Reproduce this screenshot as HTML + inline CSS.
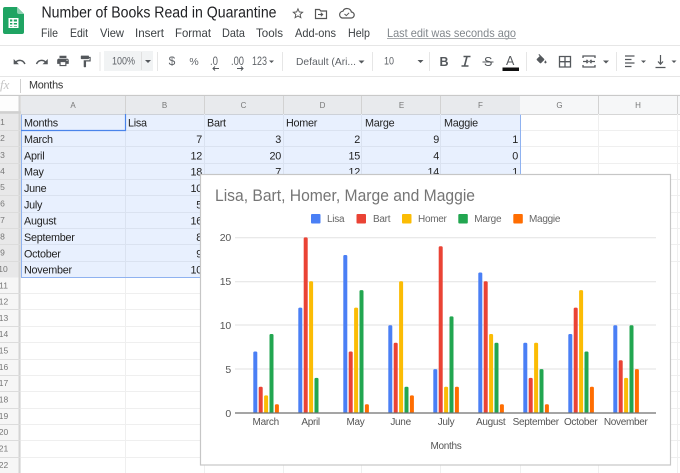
<!DOCTYPE html>
<html><head><meta charset="utf-8"><title>Number of Books Read in Quarantine</title>
<style>
html,body{margin:0;padding:0;background:#fff;width:680px;height:473px;overflow:hidden}
svg{display:block;filter:blur(.3px)}
text{font-family:"Liberation Sans",Arial,sans-serif;white-space:pre}
.m{font-size:12px;fill:#3c4043}
.t{font-size:11px;fill:#5f6368}
.c{font-size:10.8px;fill:#222;letter-spacing:-.25px}
.n{text-anchor:end}
.h{font-size:8px;fill:#777;text-anchor:middle}
.r{font-size:8.5px;fill:#777;text-anchor:middle}
.a{font-size:10px;fill:#555;text-anchor:middle;letter-spacing:-.3px}
.y{font-size:10.500px;fill:#555;text-anchor:end;letter-spacing:-.2px}
.l{font-size:10px;fill:#666;letter-spacing:-.28px}
.i{fill:#54585c}
.b1{fill:#4a7ff5}.b2{fill:#ea4335}.b3{fill:#fbbc04}.b4{fill:#22a650}.b5{fill:#ff6d01}
</style></head><body>
<svg width="680" height="473" viewBox="0 0 680 473" xmlns="http://www.w3.org/2000/svg">
<rect width="680" height="473" fill="#fff"/>

<!-- logo -->
<path d="M5 7h12l7 7v18a2 2 0 0 1-2 2H5a2 2 0 0 1-2-2V9a2 2 0 0 1 2-2z" fill="#1fa463"/>
<path d="M17 7l7 7h-5a2 2 0 0 1-2-2z" fill="#8ed1b1"/>
<path d="M8.500 18h10v10h-10z M10 19.500v2h2.300v-2z M13.800 19.500v2H17v-2z M10 23v1.500h2.300V23z M13.800 23v1.500H17V23z M10 26v.6h2.300V26z M13.800 26v.6H17V26z" fill="#fff" fill-rule="evenodd"/>

<text x="41.500" y="17.500" font-size="15.500" fill="#202124" textLength="235" lengthAdjust="spacingAndGlyphs">Number of Books Read in Quarantine</text>
<path transform="translate(291,6.500) scale(.58)" d="M22 9.240l-7.190-.62L12 2 9.190 8.630 2 9.240l5.460 4.730L5.820 21 12 17.270 18.180 21l-1.630-7.030L22 9.240zM12 15.400l-3.760 2.270 1-4.280-3.320-2.880 4.380-.38L12 6.100l1.710 4.040 4.380.38-3.320 2.880 1 4.280L12 15.400z" fill="#555"/>
<path d="M315.500 9.500h4l1.300 1.500h5.700v7.500h-11z" fill="none" stroke="#555" stroke-width="1.200"/>
<path d="M318 14.500h4.500M320.800 12.700l1.900 1.800-1.900 1.800" fill="none" stroke="#555" stroke-width="1"/>
<path d="M342 18h9a3 3 0 0 0 .4-6 4.500 4.500 0 0 0-8.500-.8A3.500 3.500 0 0 0 342 18z" fill="none" stroke="#555" stroke-width="1.200"/>
<path d="M344.500 14l1.800 1.600 2.800-2.800" fill="none" stroke="#555" stroke-width="1"/>

<text x="41" y="37" class="m" textLength="17" lengthAdjust="spacingAndGlyphs">File</text>
<text x="70" y="37" class="m" textLength="18" lengthAdjust="spacingAndGlyphs">Edit</text>
<text x="100" y="37" class="m" textLength="24" lengthAdjust="spacingAndGlyphs">View</text>
<text x="135" y="37" class="m" textLength="29" lengthAdjust="spacingAndGlyphs">Insert</text>
<text x="175" y="37" class="m" textLength="36" lengthAdjust="spacingAndGlyphs">Format</text>
<text x="222" y="37" class="m" textLength="23" lengthAdjust="spacingAndGlyphs">Data</text>
<text x="256" y="37" class="m" textLength="27" lengthAdjust="spacingAndGlyphs">Tools</text>
<text x="295" y="37" class="m" textLength="41" lengthAdjust="spacingAndGlyphs">Add-ons</text>
<text x="348" y="37" class="m" textLength="22" lengthAdjust="spacingAndGlyphs">Help</text>
<text x="387" y="37" class="m" style="fill:#80868b" textLength="129" lengthAdjust="spacingAndGlyphs">Last edit was seconds ago</text>
<path d="M387 38.500H516" stroke="#a8abae" stroke-width="1"/>

<path d="M0 45.500H680M0 76.500H680" stroke="#e6e6e6" stroke-width="1"/>

<!-- toolbar -->
<g class="i">
<path transform="translate(12.500,55) scale(.58)" d="M12.500 8c-2.650 0-5.050.99-6.900 2.600L2 7v9h9l-3.620-3.620c1.390-1.160 3.160-1.880 5.120-1.880 3.540 0 6.550 2.310 7.600 5.500l2.370-.78C21.080 11.030 17.150 8 12.500 8z"/>
<path transform="translate(35,55) scale(.58)" d="M18.400 10.600C16.550 8.990 14.150 8 11.500 8c-4.650 0-8.580 3.030-9.960 7.220L3.900 16c1.050-3.190 4.050-5.500 7.600-5.500 1.950 0 3.730.72 5.120 1.880L13 16h9V7l-3.600 3.600z"/>
<path transform="translate(56,54) scale(.58)" d="M19 8H5c-1.660 0-3 1.340-3 3v6h4v4h12v-4h4v-6c0-1.660-1.340-3-3-3zm-3 11H8v-5h8v5zm3-7c-.55 0-1-.45-1-1s.45-1 1-1 1 .45 1 1-.45 1-1 1zm-1-9H6v4h12V3z"/>
<path transform="translate(78.500,54.500) scale(.58)" d="M18 4V3c0-.55-.45-1-1-1H5c-.55 0-1 .45-1 1v4c0 .55.45 1 1 1h12c.55 0 1-.45 1-1V6h1v4H9v11c0 .55.45 1 1 1h2c.55 0 1-.45 1-1v-9h8V4h-3z"/>
</g>
<path d="M100 52v19M157.500 52v19M282.500 52v19M372.500 52v19M429.500 52v19M526.500 52v19M616.500 52v19" stroke="#e6e6e6" stroke-width="1"/>
<rect x="104" y="51" width="49" height="20" fill="#f1f3f4"/>
<path d="M141.500 52v18" stroke="#e0e0e0"/>
<text x="112" y="64.500" class="t" textLength="23" lengthAdjust="spacingAndGlyphs">100%</text>
<path d="M145 60h6l-3 3z" class="i"/>
<text x="172" y="65" class="t" text-anchor="middle" style="font-size:12px">$</text>
<text x="194" y="65" class="t" text-anchor="middle" style="font-size:10.500px">%</text>
<text x="210" y="65" class="t" style="font-size:11.500px" textLength="8" lengthAdjust="spacingAndGlyphs">.0</text>
<path d="M219 68.500h-6M215 66.500l-2 2 2 2" fill="none" stroke="#54585c"/>
<text x="231" y="65" class="t" style="font-size:11.500px" textLength="13" lengthAdjust="spacingAndGlyphs">.00</text>
<path d="M237 68.500h6M241 66.500l2 2-2 2" fill="none" stroke="#54585c"/>
<text x="252" y="65" class="t" style="font-size:11.500px" textLength="15" lengthAdjust="spacingAndGlyphs">123</text>
<path d="M269 60.500h5l-2.500 2.500z" class="i"/>
<text x="296" y="65" class="t" style="font-size:10.500px" textLength="60" lengthAdjust="spacingAndGlyphs">Default (Ari...</text>
<path d="M358.500 60.500h6l-3 3z" class="i"/>
<text x="384" y="64.500" class="t" textLength="10" lengthAdjust="spacingAndGlyphs">10</text>
<path d="M417.500 60h6l-3 3z" class="i"/>
<text x="439.500" y="66" font-size="12.500" font-weight="bold" fill="#54585c">B</text>
<path d="M463.500 56.500h7M461.500 66h7M467 56.500L464.500 66" fill="none" stroke="#54585c" stroke-width="1.600"/>
<text x="484" y="66" font-size="12.500" fill="#54585c">S</text>
<path d="M482.500 62h11" stroke="#54585c"/>
<text x="506" y="65" font-size="12.500" fill="#54585c">A</text>
<rect x="502.500" y="67.500" width="16.500" height="3.500" fill="#111"/>
<path transform="translate(535,54) scale(.55)" d="M16.560 8.940L7.620 0 6.210 1.410l2.380 2.380-5.150 5.150c-.59.59-.59 1.540 0 2.120l5.500 5.500c.29.29.68.44 1.060.44s.77-.15 1.060-.44l5.500-5.500c.59-.58.59-1.530 0-2.120zM19 11.500s-2 2.170-2 3.500c0 1.100.9 2 2 2s2-.9 2-2c0-1.330-2-3.500-2-3.500z" class="i"/>
<path d="M559.500 56.500h11v10.500h-11zM565 56.500v10.500M559.500 61.700h11" fill="none" stroke="#54585c" stroke-width="1.300"/>
<path d="M583 58v-2h12v2M583 65v2h12v-2M583 61.500h4M591 61.500h4M586.500 59.800l1.600 1.700-1.600 1.700M591.500 59.800l-1.600 1.700 1.600 1.700" fill="none" stroke="#54585c" stroke-width="1.300"/>
<path d="M603 60.500h6l-3 3z" class="i"/>
<path d="M625 56h9.500M625 59.500h6.500M625 63h9.500M625 66.500h6.500" stroke="#54585c" stroke-width="1.200"/>
<path d="M641 60.500h5l-2.500 2.500z" class="i"/>
<path d="M655.500 67.500h10M660.500 55v9M658 61.500l2.500 2.700 2.500-2.700" fill="none" stroke="#54585c" stroke-width="1.200"/>
<path d="M671.500 60.500h5l-2.500 2.500z" class="i"/>

<!-- formula bar -->
<text x="0" y="89" font-size="13" font-style="italic" fill="#c4c4c4" style="font-family:'Liberation Serif',serif">fx</text>
<path d="M20.500 79v14" stroke="#d0d0d0"/>
<text x="29" y="88.500" class="c" style="fill:#333" textLength="34" lengthAdjust="spacingAndGlyphs">Months</text>

<!-- grid -->
<path d="M0 95.500H680" stroke="#c9c9c9" stroke-width="1.200"/>
<rect x="21" y="96" width="499" height="18" fill="#e8eaed"/>
<rect x="520" y="96" width="160" height="18" fill="#f6f7f8"/>
<rect x="0" y="96" width="21" height="181.500" fill="#e8e8e9"/>
<rect x="0" y="96" width="18.500" height="15" fill="#fdfdfd"/>
<rect x="0" y="277.500" width="21" height="196" fill="#f6f6f6"/>
<path d="M19.500 96v378" stroke="#d4d4d4" stroke-width="2"/>
<path d="M0 112.500H21" stroke="#d0d0d0" stroke-width="2.500"/>
<path d="M0 130.500H20M0 146.500H20M0 163.500H20M0 179.500H20M0 195.500H20M0 212.500H20M0 228.500H20M0 244.500H20M0 261.500H20M0 293.500H20M0 309.500H20M0 326.500H20M0 342.500H20M0 359.500H20M0 375.500H20M0 391.500H20M0 408.500H20M0 424.500H20M0 440.500H20M0 457.500H20" stroke="#dcdcdc"/>
<path d="M125.500 96v18M204.500 96v18M283.500 96v18M361.500 96v18M440.500 96v18M598.500 96v18M677.500 96v18" stroke="#d2d2d2"/>
<path d="M21 114.500H680" stroke="#d6d6d6"/>
<path d="M21 130.500H680M21 146.500H680M21 163.500H680M21 179.500H680M21 195.500H680M21 212.500H680M21 228.500H680M21 244.500H680M21 261.500H680M21 293.500H680M21 309.500H680M21 326.500H680M21 342.500H680M21 359.500H680M21 375.500H680M21 391.500H680M21 408.500H680M21 424.500H680M21 440.500H680M21 457.500H680M125.500 114v359M204.500 114v359M283.500 114v359M361.500 114v359M440.500 114v359M520.500 114v359M598.500 114v359M677.500 114v359" stroke="#efefef"/>
<rect x="21" y="114.500" width="499" height="163" fill="#4285f4" fill-opacity=".12"/>
<path d="M21.500 114.500V277.500H520.500V114.500" fill="none" stroke="#8fb2f0" stroke-width="1"/>
<path d="M21 130.500H125.500V114" fill="none" stroke="#4a84ea" stroke-width="1.200"/>

<text class="h" x="73" y="108">A</text><text class="h" x="164.500" y="108">B</text><text class="h" x="243.500" y="108">C</text><text class="h" x="322.500" y="108">D</text><text class="h" x="401.500" y="108">E</text><text class="h" x="480.500" y="108">F</text><text class="h" x="559.500" y="108">G</text><text class="h" x="638" y="108">H</text>
<g class="r">
<text x="2.500" y="125">1</text><text x="2.500" y="141">2</text><text x="2.500" y="158">3</text><text x="2.500" y="174">4</text><text x="2.500" y="190">5</text><text x="2.500" y="206.500">6</text><text x="2.500" y="223">7</text><text x="2.500" y="239.500">8</text><text x="2.500" y="255.500">9</text><text x="3" y="272">10</text><text x="3.500" y="288.500">11</text><text x="3.500" y="304.500">12</text><text x="3.500" y="321">13</text><text x="3.500" y="337">14</text><text x="3.500" y="353.500">15</text><text x="3.500" y="370">16</text><text x="3.500" y="386">17</text><text x="3.500" y="402.500">18</text><text x="3.500" y="419">19</text><text x="3.500" y="435">20</text><text x="3.500" y="451.500">21</text><text x="3.500" y="468">22</text>
</g>

<g class="c">
<text x="24" y="126.700">Months</text><text x="128" y="126.700">Lisa</text><text x="207" y="126.700">Bart</text><text x="286" y="126.700">Homer</text><text x="365" y="126.700">Marge</text><text x="444" y="126.700">Maggie</text>
<text x="24" y="143">March</text><text x="24" y="159.400">April</text><text x="24" y="175.700">May</text><text x="24" y="192">June</text><text x="24" y="208.400">July</text><text x="24" y="224.700">August</text><text x="24" y="241">September</text><text x="24" y="257.400">October</text><text x="24" y="273.700">November</text>
</g>
<g class="c n">
<text x="202" y="143">7</text><text x="281" y="143">3</text><text x="360" y="143">2</text><text x="439" y="143">9</text><text x="518" y="143">1</text>
<text x="202" y="159.400">12</text><text x="281" y="159.400">20</text><text x="360" y="159.400">15</text><text x="439" y="159.400">4</text><text x="518" y="159.400">0</text>
<text x="202" y="175.700">18</text><text x="281" y="175.700">7</text><text x="360" y="175.700">12</text><text x="439" y="175.700">14</text><text x="518" y="175.700">1</text>
<text x="202" y="192">10</text><text x="202" y="208.400">5</text><text x="202" y="224.700">16</text><text x="202" y="241">8</text><text x="202" y="257.400">9</text><text x="202" y="273.700">10</text>
</g>

<!-- chart -->
<rect x="200.500" y="174.500" width="470" height="290.500" fill="#fff" stroke="#c6c6c6" stroke-width="1.200"/>
<text x="215" y="201" font-size="17" fill="#757575" textLength="260" lengthAdjust="spacingAndGlyphs">Lisa, Bart, Homer, Marge and Maggie</text>
<rect class="b1" x="311" y="214" width="9.500" height="9.500" rx="1"/><text class="l" x="327" y="222">Lisa</text>
<rect class="b2" x="356.500" y="214" width="9.500" height="9.500" rx="1"/><text class="l" x="373" y="222">Bart</text>
<rect class="b3" x="402" y="214" width="9.500" height="9.500" rx="1"/><text class="l" x="418" y="222">Homer</text>
<rect class="b4" x="458.300" y="214" width="9.500" height="9.500" rx="1"/><text class="l" x="474.300" y="222">Marge</text>
<rect class="b5" x="513.300" y="214" width="9.500" height="9.500" rx="1"/><text class="l" x="529" y="222">Maggie</text>

<path d="M235 237.700H656M235 281.700H656M235 325H656M235 369H656" stroke="#e6e6e6" stroke-width="1.200"/>
<text class="y" x="231" y="241">20</text><text class="y" x="231" y="285">15</text><text class="y" x="231" y="329">10</text><text class="y" x="231" y="373">5</text><text class="y" x="231" y="417">0</text>

<g transform="translate(253.300 0)"><rect class="b1" x="0" y="351.500" width="4" height="61.500" rx="1.300"/><rect class="b2" x="5.400" y="386.700" width="4" height="26.300" rx="1.300"/><rect class="b3" x="10.800" y="395.400" width="4" height="17.600" rx="1.300"/><rect class="b4" x="16.200" y="334" width="4" height="79" rx="1.300"/><rect class="b5" x="21.600" y="404.200" width="4" height="8.800" rx="1.300"/></g>
<g transform="translate(298.300 0)"><rect class="b1" x="0" y="307.600" width="4" height="105.400" rx="1.300"/><rect class="b2" x="5.400" y="237.400" width="4" height="175.600" rx="1.300"/><rect class="b3" x="10.800" y="281.300" width="4" height="131.700" rx="1.300"/><rect class="b4" x="16.200" y="377.900" width="4" height="35.100" rx="1.300"/></g>
<g transform="translate(343.300 0)"><rect class="b1" x="0" y="255" width="4" height="158" rx="1.300"/><rect class="b2" x="5.400" y="351.500" width="4" height="61.500" rx="1.300"/><rect class="b3" x="10.800" y="307.600" width="4" height="105.400" rx="1.300"/><rect class="b4" x="16.200" y="290.100" width="4" height="122.900" rx="1.300"/><rect class="b5" x="21.600" y="404.200" width="4" height="8.800" rx="1.300"/></g>
<g transform="translate(388.300 0)"><rect class="b1" x="0" y="325.200" width="4" height="87.800" rx="1.300"/><rect class="b2" x="5.400" y="342.800" width="4" height="70.200" rx="1.300"/><rect class="b3" x="10.800" y="281.300" width="4" height="131.700" rx="1.300"/><rect class="b4" x="16.200" y="386.700" width="4" height="26.300" rx="1.300"/><rect class="b5" x="21.600" y="395.400" width="4" height="17.600" rx="1.300"/></g>
<g transform="translate(433.300 0)"><rect class="b1" x="0" y="369.100" width="4" height="43.900" rx="1.300"/><rect class="b2" x="5.400" y="246.200" width="4" height="166.800" rx="1.300"/><rect class="b3" x="10.800" y="386.700" width="4" height="26.300" rx="1.300"/><rect class="b4" x="16.200" y="316.400" width="4" height="96.600" rx="1.300"/><rect class="b5" x="21.600" y="386.700" width="4" height="26.300" rx="1.300"/></g>
<g transform="translate(478.300 0)"><rect class="b1" x="0" y="272.500" width="4" height="140.500" rx="1.300"/><rect class="b2" x="5.400" y="281.300" width="4" height="131.700" rx="1.300"/><rect class="b3" x="10.800" y="334" width="4" height="79" rx="1.300"/><rect class="b4" x="16.200" y="342.800" width="4" height="70.200" rx="1.300"/><rect class="b5" x="21.600" y="404.200" width="4" height="8.800" rx="1.300"/></g>
<g transform="translate(523.300 0)"><rect class="b1" x="0" y="342.800" width="4" height="70.200" rx="1.300"/><rect class="b2" x="5.400" y="377.900" width="4" height="35.100" rx="1.300"/><rect class="b3" x="10.800" y="342.800" width="4" height="70.200" rx="1.300"/><rect class="b4" x="16.200" y="369.100" width="4" height="43.900" rx="1.300"/><rect class="b5" x="21.600" y="404.200" width="4" height="8.800" rx="1.300"/></g>
<g transform="translate(568.300 0)"><rect class="b1" x="0" y="334" width="4" height="79" rx="1.300"/><rect class="b2" x="5.400" y="307.600" width="4" height="105.400" rx="1.300"/><rect class="b3" x="10.800" y="290.100" width="4" height="122.900" rx="1.300"/><rect class="b4" x="16.200" y="351.500" width="4" height="61.500" rx="1.300"/><rect class="b5" x="21.600" y="386.700" width="4" height="26.300" rx="1.300"/></g>
<g transform="translate(613.300 0)"><rect class="b1" x="0" y="325.200" width="4" height="87.800" rx="1.300"/><rect class="b2" x="5.400" y="360.300" width="4" height="52.700" rx="1.300"/><rect class="b3" x="10.800" y="377.900" width="4" height="35.100" rx="1.300"/><rect class="b4" x="16.200" y="325.200" width="4" height="87.800" rx="1.300"/><rect class="b5" x="21.600" y="369.100" width="4" height="43.900" rx="1.300"/></g>
<path d="M235 413H656" stroke="#6f6f6f" stroke-width="1.200"/>

<text class="a" x="265.700" y="425">March</text><text class="a" x="310.600" y="425">April</text><text class="a" x="355.500" y="425">May</text><text class="a" x="400.600" y="425">June</text><text class="a" x="446" y="425">July</text><text class="a" x="490.700" y="425">August</text><text class="a" x="535.700" y="425">September</text><text class="a" x="580.700" y="425">October</text><text class="a" x="625.700" y="425">November</text>
<text class="a" x="446" y="449">Months</text>
</svg>
</body></html>
